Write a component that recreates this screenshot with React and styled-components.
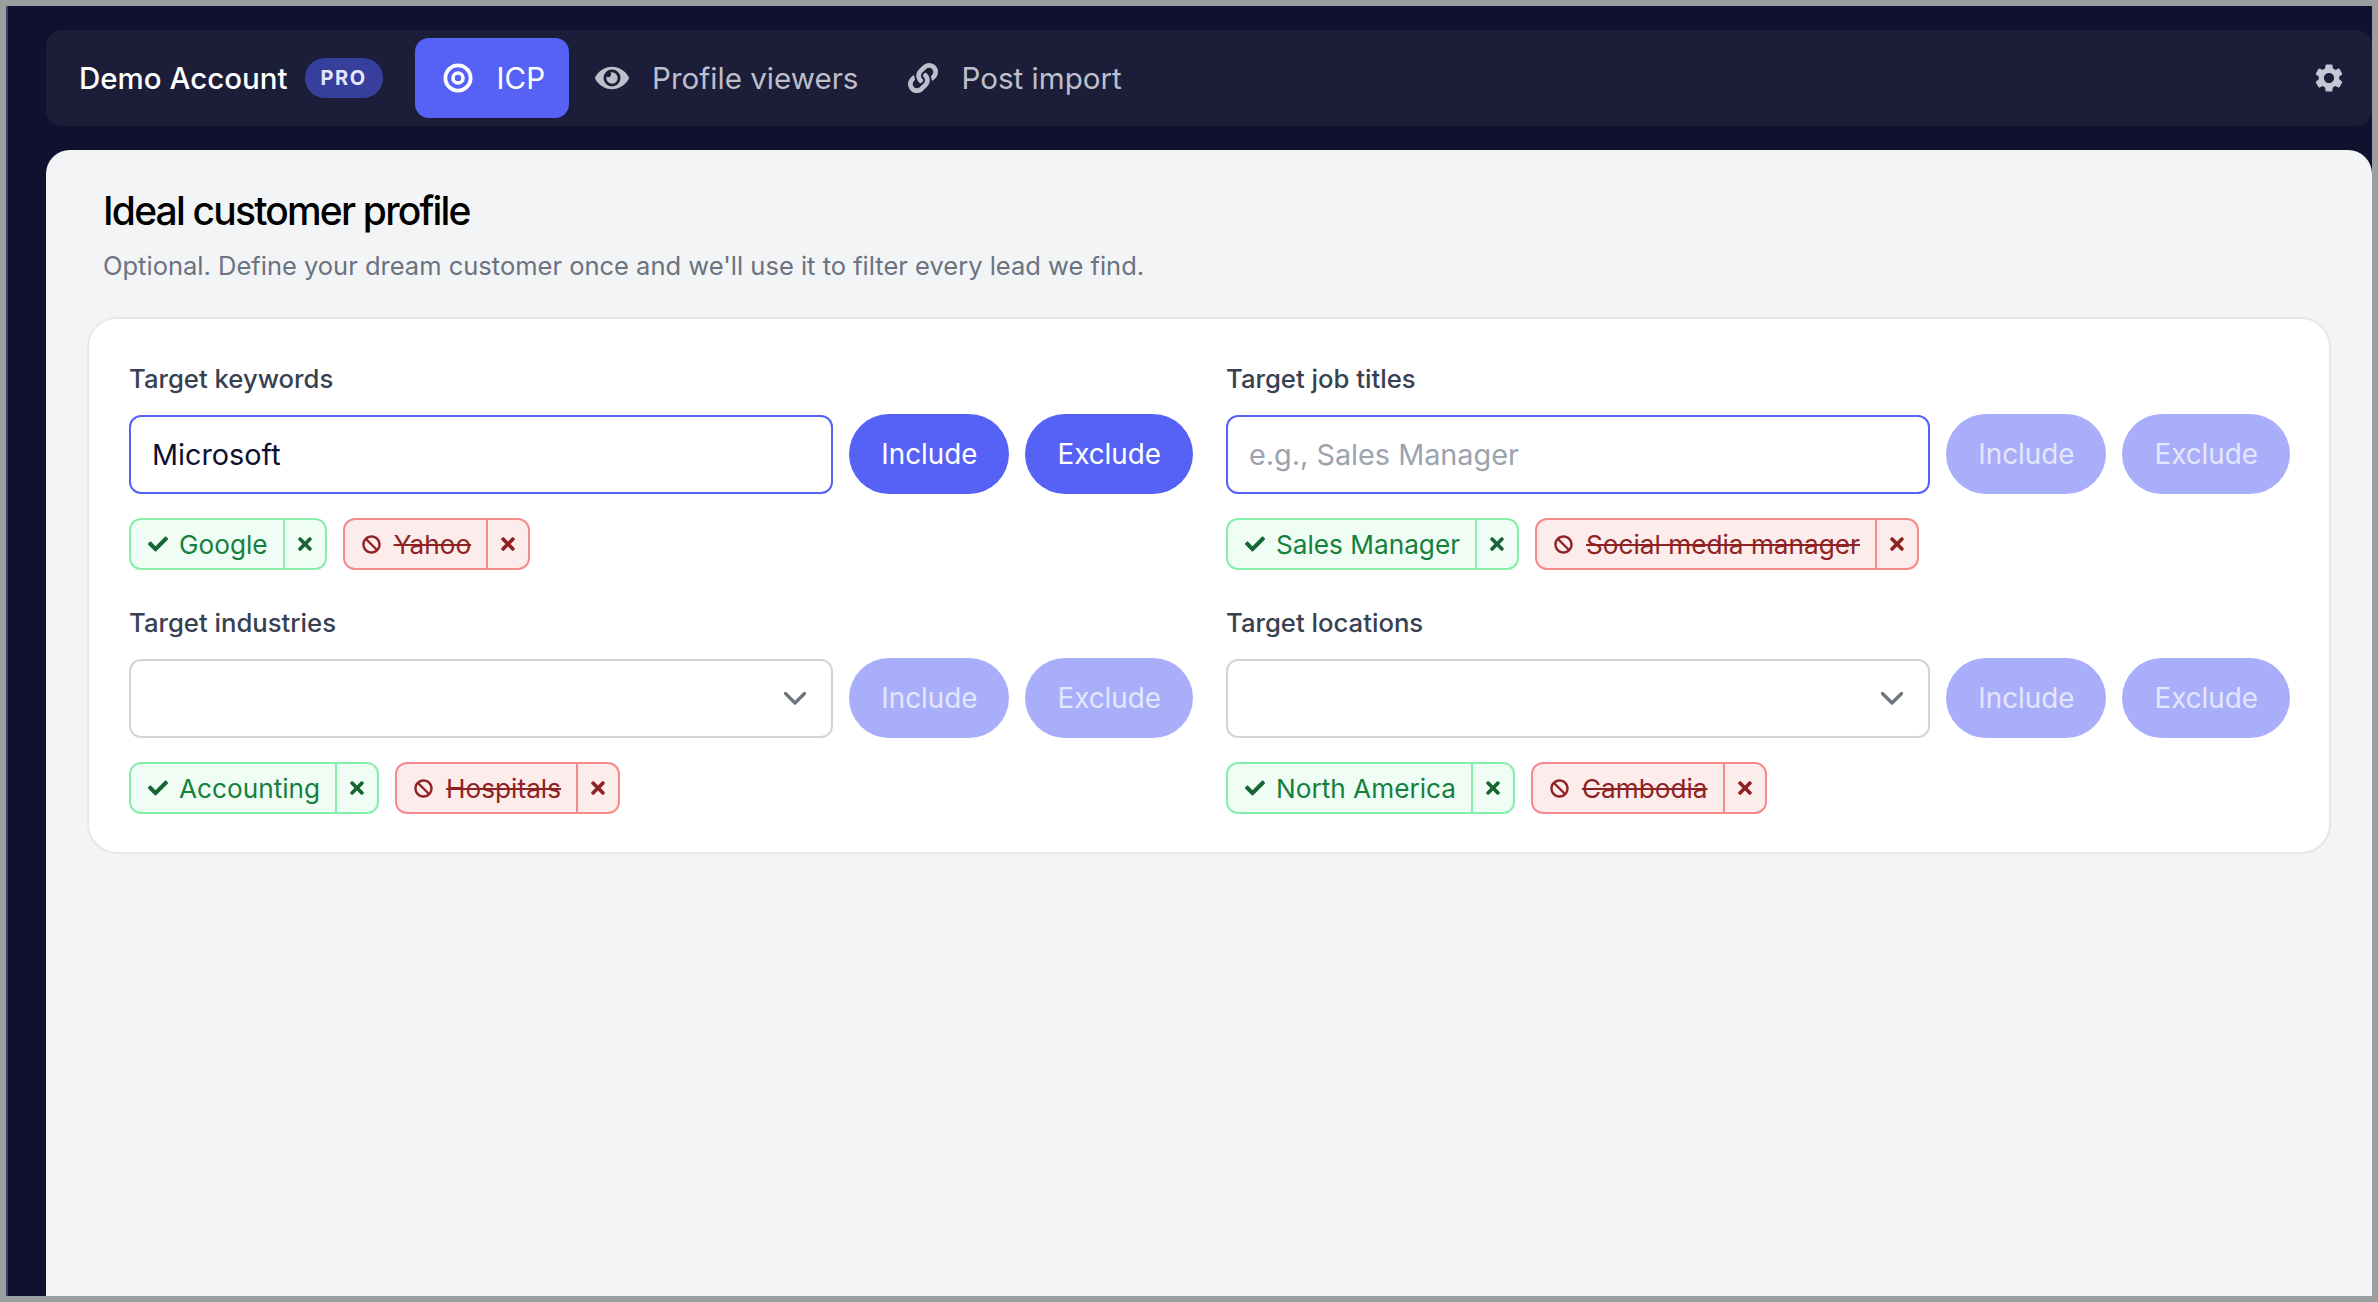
import React from "react";
import styled, { createGlobalStyle } from "styled-components";
import { FaCheck, FaTimes, FaBan, FaEye, FaLink } from "react-icons/fa";
import { MdSettings } from "react-icons/md";

const GlobalStyle = createGlobalStyle`
  html, body {
    margin: 0;
    padding: 0;
    height: 100%;
    overflow: hidden;
  }
  body {
    background: #9a9e9f;
    font-family: Inter, "Liberation Sans", sans-serif;
  }
`;

const sections = [
  {
    label: "Target keywords",
    value: "Microsoft",
    active: true,
    include: "Google",
    exclude: "Yahoo",
  },
  {
    label: "Target job titles",
    placeholder: "e.g., Sales Manager",
    active: false,
    include: "Sales Manager",
    exclude: "Social media manager",
  },
  {
    label: "Target industries",
    select: true,
    include: "Accounting",
    exclude: "Hospitals",
  },
  {
    label: "Target locations",
    select: true,
    include: "North America",
    exclude: "Cambodia",
  },
];

function TargetIcon() {
  return (
    <TargetSvg width="30" height="30" viewBox="0 0 30 30" fill="none">
      <circle cx="15" cy="15" r="12.6" stroke="#fff" strokeWidth="3.8" />
      <circle cx="15" cy="15" r="5" stroke="#fff" strokeWidth="3.6" />
    </TargetSvg>
  );
}

function Chevron() {
  return (
    <svg width="22" height="13" viewBox="0 0 22 13" fill="none">
      <polyline
        points="1.5,1.5 11,11 20.5,1.5"
        stroke="#6b7280"
        strokeWidth="3.2"
        strokeLinecap="round"
        strokeLinejoin="round"
      />
    </svg>
  );
}

function Tag({ kind, children }) {
  return (
    <TagBox $kind={kind}>
      <TagLabel $kind={kind}>
        {kind === "include" ? <FaCheck size={20} /> : <FaBan size={19} />}
        <TagText $kind={kind}>{children}</TagText>
      </TagLabel>
      <TagRemove $kind={kind}>
        <FaTimes size={20} />
      </TagRemove>
    </TagBox>
  );
}

function Field({ item }) {
  return (
    <Section>
      <Label>{item.label}</Label>
      <InputRow>
        {item.select ? (
          <SelectBox>
            <Chevron />
          </SelectBox>
        ) : (
          <TextInput
            readOnly
            value={item.value || ""}
            placeholder={item.placeholder}
          />
        )}
        <ActionButton $enabled={item.active}>Include</ActionButton>
        <ActionButton $enabled={item.active}>Exclude</ActionButton>
      </InputRow>
      <TagRow>
        <Tag kind="include">{item.include}</Tag>
        <Tag kind="exclude">{item.exclude}</Tag>
      </TagRow>
    </Section>
  );
}

export default function App() {
  return (
    <Frame>
      <GlobalStyle />
      <Shell>
        <TopBar>
          <Account>
            Demo Account
            <ProBadge>PRO</ProBadge>
          </Account>
          <NavItem $active>
            <TargetIcon />
            ICP
          </NavItem>
          <NavItem>
            <FaEye size={34} />
            Profile viewers
          </NavItem>
          <NavItem>
            <FaLink size={30} />
            Post import
          </NavItem>
          <SettingsButton>
            <MdSettings size={34} />
          </SettingsButton>
        </TopBar>
        <Page>
          <Title>Ideal customer profile</Title>
          <Subtitle>
            Optional. Define your dream customer once and we'll use it to filter
            every lead we find.
          </Subtitle>
          <Card>
            {sections.map((item) => (
              <Field key={item.label} item={item} />
            ))}
          </Card>
        </Page>
      </Shell>
    </Frame>
  );
}

const Frame = styled.div`
  height: 1302px;
  box-sizing: border-box;
  padding: 6px;
`;

const Shell = styled.div`
  height: 100%;
  box-sizing: border-box;
  background: #0f112e;
  border-left: 2px solid #3d4058;
  padding: 24px 0 0 38px;
  display: flex;
  flex-direction: column;
  gap: 24px;
`;

const TopBar = styled.nav`
  height: 96px;
  flex: none;
  background: #1b1d39;
  border-radius: 16px;
  display: flex;
  align-items: center;
  padding: 0 26px 0 33px;
`;

const Account = styled.div`
  display: flex;
  align-items: center;
  gap: 17px;
  color: #fff;
  font-size: 29.5px;
  font-weight: 500;
  margin-right: 32px;
`;

const ProBadge = styled.span`
  height: 40px;
  width: 78px;
  border-radius: 20px;
  background: #363f9c;
  color: #e4e6fb;
  font-size: 20px;
  font-weight: 700;
  letter-spacing: 1.6px;
  display: flex;
  align-items: center;
  justify-content: center;
`;

const NavItem = styled.div`
  height: 80px;
  box-sizing: border-box;
  padding: ${(p) => (p.$active ? "0 24px 0 28px" : "0 24px 0 26px")};
  border-radius: 14px;
  display: flex;
  align-items: center;
  gap: 23px;
  font-size: 29.6px;
  background: ${(p) => (p.$active ? "#5661f6" : "transparent")};
  color: ${(p) => (p.$active ? "#fff" : "#bebfcb")};
`;

const TargetSvg = styled.svg`
  margin-right: 1px;
`;

const SettingsButton = styled.div`
  margin-left: auto;
  color: #c6c7d4;
  display: flex;
`;

const Page = styled.main`
  flex: 1;
  background: #f3f4f6;
  border-radius: 24px 24px 0 0;
  padding: 36px 41px 0;
`;

const Title = styled.h1`
  margin: 0 0 0 16px;
  font-size: 39px;
  line-height: 50px;
  font-weight: 500;
  letter-spacing: -1.8px;
  color: #000;
`;

const Subtitle = styled.p`
  margin: 13px 0 0 16px;
  font-size: 25.5px;
  line-height: 34px;
  color: #6b7280;
`;

const Card = styled.section`
  margin-top: 34px;
  box-sizing: border-box;
  height: 537px;
  background: #fff;
  border: 2px solid #e5e7eb;
  border-radius: 30px;
  padding: 43px 40px 0 40px;
  display: grid;
  grid-template-columns: 1064px 1064px;
  column-gap: 33px;
  row-gap: 36px;
  align-content: start;
`;

const Section = styled.div`
  display: flex;
  flex-direction: column;
`;

const Label = styled.label`
  font-size: 25.7px;
  line-height: 34px;
  font-weight: 500;
  color: #374151;
  margin-bottom: 18px;
`;

const InputRow = styled.div`
  display: flex;
  align-items: center;
  gap: 16px;
`;

const fieldBox = `
  flex: 1;
  min-width: 0;
  height: 79px;
  box-sizing: border-box;
  background: #fff;
  border-radius: 12px;
`;

const TextInput = styled.input`
  ${fieldBox}
  border: 2px solid #5661f6;
  padding: 0 21px;
  font-family: inherit;
  font-size: 28.8px;
  color: #0e1130;
  outline: none;

  &::placeholder {
    color: #9ca3af;
  }
`;

const SelectBox = styled.div`
  ${fieldBox}
  border: 2px solid #d1d5db;
  display: flex;
  align-items: center;
  justify-content: flex-end;
  padding-right: 25px;
`;

const ActionButton = styled.button`
  height: 80px;
  flex: none;
  border: 0;
  border-radius: 40px;
  padding: 0 32px;
  font-family: inherit;
  font-size: 27.8px;
  font-weight: 400;
  background: ${(p) => (p.$enabled ? "#5661f6" : "#a9aefb")};
  color: ${(p) => (p.$enabled ? "#fff" : "#e4e6fd")};
`;

const TagRow = styled.div`
  display: flex;
  gap: 16px;
  margin-top: 24px;
`;

const tagColors = {
  include: { bg: "#f0fdf4", border: "#86efac", text: "#15803d", icon: "#166534" },
  exclude: { bg: "#fdecec", border: "#f48a8a", text: "#8f2323", icon: "#8f2323" },
};

const TagBox = styled.div`
  height: 52px;
  box-sizing: border-box;
  display: flex;
  align-items: stretch;
  background: ${(p) => tagColors[p.$kind].bg};
  border: 2px solid ${(p) => tagColors[p.$kind].border};
  border-radius: 12px;
  color: ${(p) => tagColors[p.$kind].icon};
`;

const TagLabel = styled.div`
  display: flex;
  align-items: center;
  gap: ${(p) => (p.$kind === "exclude" ? "13px" : "11px")};
  padding: 0 15px 0 17px;
`;

const TagText = styled.span`
  font-size: 26.2px;
  color: ${(p) => tagColors[p.$kind].text};
  text-decoration: ${(p) => (p.$kind === "exclude" ? "line-through" : "none")};
`;

const TagRemove = styled.div`
  width: 40px;
  display: flex;
  align-items: center;
  justify-content: center;
  border-left: 2px solid ${(p) => tagColors[p.$kind].border};
`;
